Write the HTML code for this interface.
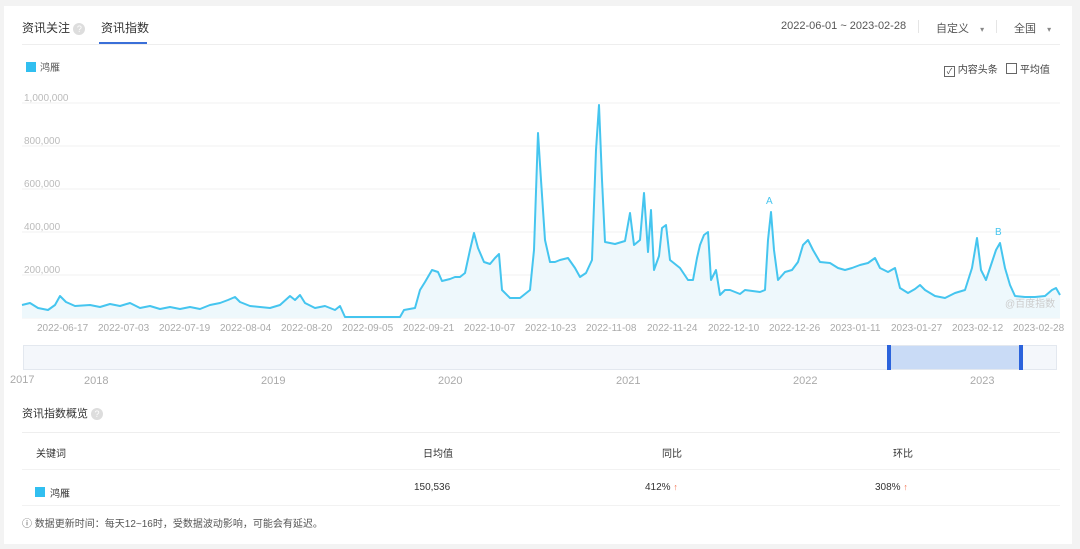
<!DOCTYPE html>
<html><head><meta charset="utf-8"><style>
body{margin:0;width:1080px;height:549px;background:#f3f3f3;font-family:"Liberation Sans","Noto Sans CJK SC",sans-serif;overflow:hidden;position:relative}
.card{position:absolute;left:4px;top:6px;width:1068px;height:538px;background:#fff}
.t{position:absolute;font-size:11px;color:#333;white-space:nowrap}
.g{color:#999;font-size:10px}
.q{display:inline-block;width:12px;height:12px;border-radius:50%;background:#ddd;color:#fff;font-size:9px;text-align:center;line-height:12px;vertical-align:middle}
.line{position:absolute;height:1px;background:#eee}
</style></head><body>
<div class="card"></div>
<div class="t" style="left:22px;top:19px;font-size:12px">资讯关注 <span class="q">?</span></div>
<div class="t" style="left:101px;top:19px;font-size:12px">资讯指数</div>
<div style="position:absolute;left:99px;top:42px;width:48px;height:2px;background:#3a6fd8"></div>
<div class="line" style="left:22px;top:44px;width:1038px"></div>
<div class="t" style="left:781px;top:20px;color:#555">2022-06-01 ~ 2023-02-28</div>
<div style="position:absolute;left:918px;top:20px;width:1px;height:13px;background:#e5e5e5"></div>
<div class="t" style="left:936px;top:20px;color:#555">自定义 <span style="margin-left:8px;font-size:8px;color:#888">▾</span></div>
<div style="position:absolute;left:996px;top:20px;width:1px;height:13px;background:#e5e5e5"></div>
<div class="t" style="left:1014px;top:20px;color:#555">全国 <span style="margin-left:8px;font-size:8px;color:#888">▾</span></div>
<div style="position:absolute;left:26px;top:62px;width:10px;height:10px;background:#31bff0"></div>
<div class="t" style="left:40px;top:59px;font-size:10px;color:#555">鸿雁</div>
<div class="t" style="left:944px;top:61px;color:#444;font-size:10px"><span style="display:inline-block;width:9px;height:9px;border:1px solid #666;font-size:8px;line-height:9px;text-align:center;vertical-align:-1px">✓</span> 内容头条 &nbsp;&nbsp;<span style="display:inline-block;width:9px;height:9px;border:1px solid #666;vertical-align:-1px"></span> 平均值</div>
<svg width="1080" height="549" style="position:absolute;left:0;top:0">
<g stroke="#f0f0f0"><line x1="22" x2="1060" y1="103" y2="103"/><line x1="22" x2="1060" y1="146" y2="146"/><line x1="22" x2="1060" y1="189" y2="189"/><line x1="22" x2="1060" y1="232" y2="232"/><line x1="22" x2="1060" y1="275" y2="275"/><line x1="22" x2="1060" y1="318" y2="318"/></g>
<g fill="#bbb" font-size="10" font-family="Liberation Sans"><text x="24" y="101">1,000,000</text><text x="24" y="144">800,000</text><text x="24" y="187">600,000</text><text x="24" y="230">400,000</text><text x="24" y="273">200,000</text></g>
<polyline id="p" fill="#eef8fc" stroke="none" points="22,318 22,305 30,303 38,308 48,310 55,305 60,296 66,302 75,306 90,305 100,307 110,304 120,306 130,303 140,308 150,306 160,309 170,307 180,309 190,307 200,309 210,305 220,303 228,300 235,297 240,302 250,306 260,307 270,308 280,305 290,296 295,300 300,295 305,303 315,308 325,306 335,310 340,306 345,317 400,317 404,310 415,308 420,290 425,282 432,270 438,272 442,281 450,279 455,277 460,277 465,273 470,250 474,233 478,248 484,262 490,264 495,258 499,254 502,290 510,298 520,298 530,290 534,250 538,133 541,180 545,240 550,262 555,262 560,260 568,258 575,268 580,277 586,273 592,260 596,150 599,105 602,180 605,242 615,244 625,241 630,213 634,245 640,240 644,193 648,252 651,210 654,270 659,256 662,228 666,225 670,260 680,268 688,280 693,280 697,258 700,245 704,235 708,232 711,280 716,270 720,295 725,290 730,290 740,294 745,290 760,292 765,290 768,240 771,212 774,250 778,280 785,272 792,270 798,262 803,245 808,240 813,250 820,262 830,263 838,268 845,270 852,268 860,265 868,263 875,258 880,268 888,272 895,268 900,288 908,293 915,289 920,285 925,290 935,296 945,298 955,293 965,290 972,268 977,238 981,270 986,280 991,265 996,250 1000,243 1005,268 1010,285 1015,296 1025,297 1035,297 1045,296 1052,290 1056,288 1060,295 1060,318"/>
<polyline fill="none" stroke="#45c5ef" stroke-width="2" stroke-linejoin="round" points="22,305 30,303 38,308 48,310 55,305 60,296 66,302 75,306 90,305 100,307 110,304 120,306 130,303 140,308 150,306 160,309 170,307 180,309 190,307 200,309 210,305 220,303 228,300 235,297 240,302 250,306 260,307 270,308 280,305 290,296 295,300 300,295 305,303 315,308 325,306 335,310 340,306 345,317 400,317 404,310 415,308 420,290 425,282 432,270 438,272 442,281 450,279 455,277 460,277 465,273 470,250 474,233 478,248 484,262 490,264 495,258 499,254 502,290 510,298 520,298 530,290 534,250 538,133 541,180 545,240 550,262 555,262 560,260 568,258 575,268 580,277 586,273 592,260 596,150 599,105 602,180 605,242 615,244 625,241 630,213 634,245 640,240 644,193 648,252 651,210 654,270 659,256 662,228 666,225 670,260 680,268 688,280 693,280 697,258 700,245 704,235 708,232 711,280 716,270 720,295 725,290 730,290 740,294 745,290 760,292 765,290 768,240 771,212 774,250 778,280 785,272 792,270 798,262 803,245 808,240 813,250 820,262 830,263 838,268 845,270 852,268 860,265 868,263 875,258 880,268 888,272 895,268 900,288 908,293 915,289 920,285 925,290 935,296 945,298 955,293 965,290 972,268 977,238 981,270 986,280 991,265 996,250 1000,243 1005,268 1010,285 1015,296 1025,297 1035,297 1045,296 1052,290 1056,288 1060,295"/>
<g fill="#45c5ef" font-size="10" font-family="Liberation Sans"><text x="766" y="204">A</text><text x="995" y="235">B</text></g>
<text x="1005" y="307" fill="#ccc" font-size="10" font-family="Liberation Sans,Noto Sans CJK SC">@百度指数</text>
<g fill="#aaa" font-size="10" font-family="Liberation Sans"><text x="37" y="331">2022-06-17</text><text x="98" y="331">2022-07-03</text><text x="159" y="331">2022-07-19</text><text x="220" y="331">2022-08-04</text><text x="281" y="331">2022-08-20</text><text x="342" y="331">2022-09-05</text><text x="403" y="331">2022-09-21</text><text x="464" y="331">2022-10-07</text><text x="525" y="331">2022-10-23</text><text x="586" y="331">2022-11-08</text><text x="647" y="331">2022-11-24</text><text x="708" y="331">2022-12-10</text><text x="769" y="331">2022-12-26</text><text x="830" y="331">2023-01-11</text><text x="891" y="331">2023-01-27</text><text x="952" y="331">2023-02-12</text><text x="1013" y="331">2023-02-28</text></g>
<rect x="23.5" y="345.5" width="1033" height="24" fill="#f4f7fb" stroke="#e3e8ef"/>
<rect x="888" y="346" width="133" height="23" fill="#c9dbf6"/>
<rect x="887" y="345" width="4" height="25" fill="#2b63dc"/><rect x="1019" y="345" width="4" height="25" fill="#2b63dc"/>
<g fill="#aaa" font-size="11" font-family="Liberation Sans"><text x="10" y="383">2017</text><text x="84" y="384">2018</text><text x="261" y="384">2019</text><text x="438" y="384">2020</text><text x="616" y="384">2021</text><text x="793" y="384">2022</text><text x="970" y="384">2023</text></g>
</svg>
<div class="t" style="left:22px;top:405px;font-size:11px">资讯指数概览 <span class="q">?</span></div>
<div class="line" style="left:22px;top:432px;width:1038px;background:#eee"></div>
<div class="t" style="left:36px;top:445px;font-size:10px">关键词</div>
<div class="t" style="left:423px;top:445px;font-size:10px">日均值</div>
<div class="t" style="left:662px;top:445px;font-size:10px">同比</div>
<div class="t" style="left:893px;top:445px;font-size:10px">环比</div>
<div class="line" style="left:22px;top:469px;width:1038px;background:#f2f2f2"></div>
<div style="position:absolute;left:35px;top:487px;width:10px;height:10px;background:#31bff0"></div>
<div class="t" style="left:50px;top:485px;font-size:10px">鸿雁</div>
<div class="t" style="left:414px;top:482px;font-size:10px">150,536</div>
<div class="t" style="left:645px;top:482px;font-size:10px">412% <span style="color:#f36f4c;font-size:9px">↑</span></div>
<div class="t" style="left:875px;top:482px;font-size:10px">308% <span style="color:#f36f4c;font-size:9px">↑</span></div>
<div class="line" style="left:22px;top:505px;width:1038px;background:#f2f2f2"></div>
<div class="t" style="left:22px;top:515px;font-size:10px;color:#555">ⓘ 数据更新时间：每天12~16时，受数据波动影响，可能会有延迟。</div>
</body></html>
